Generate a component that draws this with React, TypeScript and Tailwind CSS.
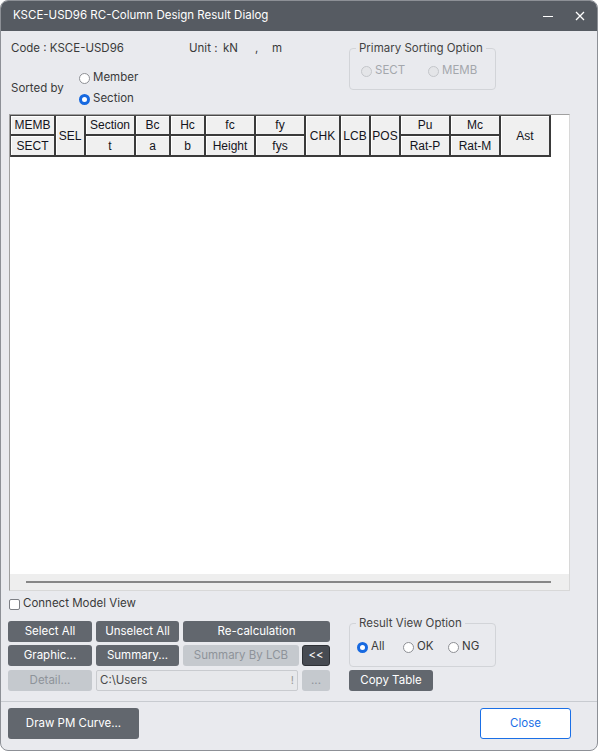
import React from 'react';

const UI_FONT = { fontFamily: 'Inter, "Noto Sans", sans-serif' };
const GRID_FONT = { fontFamily: '"Liberation Sans", Arial, sans-serif' };

function Radio({ checked, disabled }: { checked?: boolean; disabled?: boolean }) {
  if (checked) {
    return <span className="w-[11px] h-[11px] rounded-full border-[3px] border-[#1769e0] bg-white shrink-0" />;
  }
  return (
    <span
      className={
        disabled
          ? 'w-[11px] h-[11px] rounded-full border border-[#c4c6ca] bg-[#e4e5e8] shrink-0'
          : 'w-[11px] h-[11px] rounded-full border border-[#8e9095] bg-white shrink-0'
      }
    />
  );
}

function Btn({ label, w, disabled, dark }: { label: string; w: string; disabled?: boolean; dark?: boolean }) {
  let cls = 'bg-[#62676e] text-white';
  if (disabled) cls = 'bg-[#c5c9ce] text-[#8e939a]';
  if (dark) cls = 'bg-[#474b52] text-white border border-[#2e3136]';
  return (
    <div className={`${w} h-[21px] rounded-[3px] flex items-center justify-center text-[11.5px] shrink-0 ${cls}`}>
      {label}
    </div>
  );
}

const HEADER = [
  { t: 'MEMB', c: 'col-start-1 row-start-1' },
  { t: 'SECT', c: 'col-start-1 row-start-2' },
  { t: 'SEL', c: 'col-start-2 row-start-1 row-span-2' },
  { t: 'Section', c: 'col-start-3 row-start-1' },
  { t: 't', c: 'col-start-3 row-start-2' },
  { t: 'Bc', c: 'col-start-4 row-start-1' },
  { t: 'a', c: 'col-start-4 row-start-2' },
  { t: 'Hc', c: 'col-start-5 row-start-1' },
  { t: 'b', c: 'col-start-5 row-start-2' },
  { t: 'fc', c: 'col-start-6 row-start-1' },
  { t: 'Height', c: 'col-start-6 row-start-2' },
  { t: 'fy', c: 'col-start-7 row-start-1' },
  { t: 'fys', c: 'col-start-7 row-start-2' },
  { t: 'CHK', c: 'col-start-8 row-start-1 row-span-2' },
  { t: 'LCB', c: 'col-start-9 row-start-1 row-span-2' },
  { t: 'POS', c: 'col-start-10 row-start-1 row-span-2' },
  { t: 'Pu', c: 'col-start-11 row-start-1' },
  { t: 'Rat-P', c: 'col-start-11 row-start-2' },
  { t: 'Mc', c: 'col-start-12 row-start-1' },
  { t: 'Rat-M', c: 'col-start-12 row-start-2' },
  { t: 'Ast', c: 'col-start-13 row-start-1 row-span-2' },
];

export default function App() {
  return (
    <div
      className="w-[598px] h-[751px] bg-[#e9eaee] border border-[#8d9096] rounded-[8px] overflow-hidden flex flex-col text-[#3a3a3a]"
      style={UI_FONT}
    >
      {/* title bar */}
      <div className="h-[30px] bg-[#565b62] flex items-center pl-[12px] text-white text-[11.5px] shrink-0">
        <span>KSCE-USD96 RC-Column Design Result Dialog</span>
        <svg className="ml-auto" width="12" height="12" viewBox="0 0 12 12">
          <line x1="1" y1="6.5" x2="11" y2="6.5" stroke="#fff" strokeWidth="1.2" />
        </svg>
        <svg className="ml-[20px] mr-[11px]" width="12" height="12" viewBox="0 0 12 12">
          <path d="M2 2 L10 10 M10 2 L2 10" stroke="#fff" strokeWidth="1.3" />
        </svg>
      </div>

      {/* top options */}
      <div className="h-[83px] flex shrink-0">
        <div className="w-[339px] pl-[10px] text-[11.5px]">
          <div className="mt-[10px] h-[16px] flex items-center">
            <span className="w-[178px]">Code : KSCE-USD96</span>
            <span className="w-[34px]">Unit :</span>
            <span className="w-[32px]">kN</span>
            <span className="w-[17px]">,</span>
            <span>m</span>
          </div>
          <div className="mt-[13px] flex items-center">
            <span className="w-[68px]">Sorted by</span>
            <div className="flex flex-col gap-[5px]">
              <div className="h-[16px] flex items-center gap-[3px]">
                <Radio />
                <span>Member</span>
              </div>
              <div className="h-[16px] flex items-center gap-[3px]">
                <Radio checked />
                <span>Section</span>
              </div>
            </div>
          </div>
        </div>
        <fieldset className="ml-[9px] mt-[9px] w-[147px] h-[50px] border border-[#d2d4d8] rounded-[4px]">
          <legend className="ml-[6px] px-[3px] text-[11.5px] leading-[16px] text-[#444]">Primary Sorting Option</legend>
          <div className="mt-[7px] pl-[11px] h-[16px] flex items-center text-[11.5px] text-[#a4a7ac]">
            <div className="w-[67px] flex items-center gap-[3px]">
              <Radio disabled />
              <span>SECT</span>
            </div>
            <div className="flex items-center gap-[3px]">
              <Radio disabled />
              <span>MEMB</span>
            </div>
          </div>
        </fieldset>
      </div>

      {/* result grid */}
      <div
        className="ml-[8px] w-[561px] h-[477px] border border-[#a0a0a0] border-r-[#d8d8d8] border-b-[#d8d8d8] bg-white flex flex-col shrink-0"
        style={GRID_FONT}
      >
        <div className="grid grid-cols-[45px_30px_50px_35px_35px_50px_50px_35px_30px_30px_50px_50px_50px] grid-rows-[20px_21px] w-[541px] border-l border-t border-[#4a4a4a]">
          {HEADER.map((h) => (
            <div
              key={h.t}
              className={`${h.c} bg-[#f0f0f0] border-r-2 border-b-2 border-[#3a3a3a] shadow-[inset_1px_1px_0_#ffffff] flex items-center justify-center text-[12px] text-[#141420]`}
            >
              {h.t}
            </div>
          ))}
        </div>
        <div className="flex-1" />
        <div className="h-[16px] bg-[#eeeeee] flex items-center">
          <div className="ml-[16px] w-[525px] h-[2px] bg-[#878787]" />
        </div>
      </div>

      {/* connect model view */}
      <div className="mt-[6px] h-[14px] flex items-center text-[11.5px] shrink-0">
        <span className="ml-[8px] w-[11px] h-[11px] border border-[#7d7f84] rounded-[2px] bg-white" />
        <span className="ml-[3px]">Connect Model View</span>
      </div>

      {/* commands */}
      <div className="flex shrink-0">
        <div className="ml-[7px] pt-[10px] flex flex-col">
          <div className="flex gap-[4px]">
            <Btn label="Select All" w="w-[84px]" />
            <Btn label="Unselect All" w="w-[83px]" />
            <Btn label="Re-calculation" w="w-[147px]" />
          </div>
          <div className="mt-[3px] flex gap-[4px]">
            <Btn label="Graphic..." w="w-[84px]" />
            <Btn label="Summary..." w="w-[83px]" />
            <Btn label="Summary By LCB" w="w-[116px]" disabled />
            <div className="-ml-[1px]">
              <Btn label="<<" w="w-[28px]" dark />
            </div>
          </div>
          <div className="mt-[4px] flex gap-[4px]">
            <Btn label="Detail..." w="w-[84px]" disabled />
            <div className="w-[202px] h-[21px] bg-[#e7e8eb] border border-[#c9cbcf] rounded-[2px] flex items-center px-[3px] text-[11.5px] text-[#4a4a4a]">
              <span>C:\Users</span>
              <span className="ml-auto text-[11px] text-[#9a9a9a]">!</span>
            </div>
            <Btn label="..." w="w-[28px]" disabled />
          </div>
        </div>
        <div className="ml-[19px] flex flex-col">
          <fieldset className="mt-[4px] w-[147px] h-[52px] border border-[#d2d4d8] rounded-[4px]">
            <legend className="ml-[6px] px-[3px] text-[11.5px] leading-[16px] text-[#444]">Result View Option</legend>
            <div className="mt-[8px] pl-[7px] h-[16px] flex items-center text-[11.5px] text-[#3a3a3a]">
              <div className="w-[46px] flex items-center gap-[3px]">
                <Radio checked />
                <span>All</span>
              </div>
              <div className="w-[45px] flex items-center gap-[3px]">
                <Radio />
                <span>OK</span>
              </div>
              <div className="flex items-center gap-[3px]">
                <Radio />
                <span>NG</span>
              </div>
            </div>
          </fieldset>
          <div className="mt-[3px]">
            <Btn label="Copy Table" w="w-[84px]" />
          </div>
        </div>
      </div>

      <div className="mt-[10px] h-px bg-[#c8cbd0] shrink-0" />

      <div className="mt-[6px] flex shrink-0">
        <div className="ml-[7px] w-[131px] h-[31px] rounded-[3px] bg-[#62676e] text-white text-[11.5px] flex items-center justify-center">
          Draw PM Curve...
        </div>
        <div className="ml-auto mr-[26px] w-[91px] h-[31px] rounded-[3px] bg-white border border-[#1a6fe6] text-[#1a6fe6] text-[11.5px] flex items-center justify-center">
          Close
        </div>
      </div>
    </div>
  );
}
